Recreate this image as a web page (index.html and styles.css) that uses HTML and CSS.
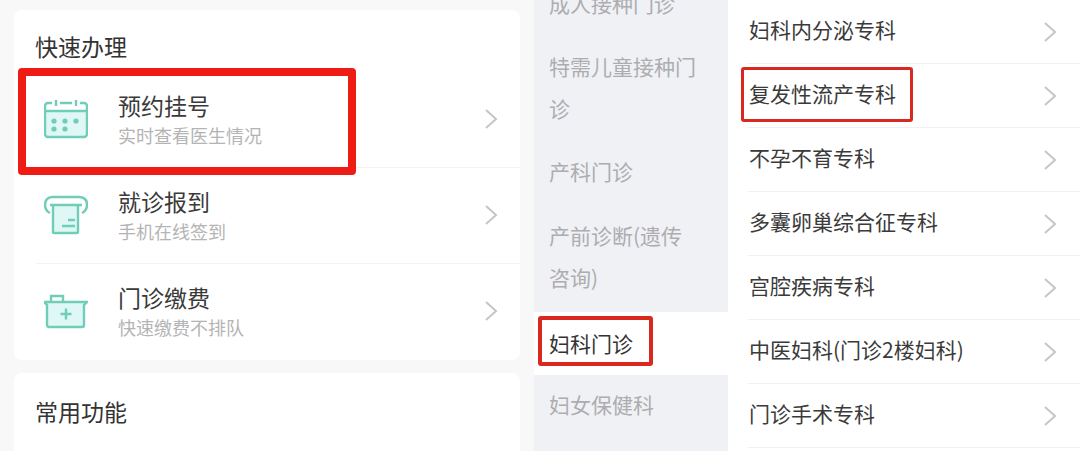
FILE: index.html
```html
<!DOCTYPE html>
<html lang="zh-CN">
<head>
    <meta charset="UTF-8">
    <meta name="viewport" content="width=device-width, initial-scale=1.0">
    <title>快速办理</title>
    <link rel="stylesheet" href="styles.css">
</head>
<body>
<div class="page">
    <div class="home">
        <section class="card">
            <h2 class="card-title">快速办理</h2>
            <div class="service">
                <svg class="service-icon" viewBox="0 0 44 40">
                    <path class="tint" d="M2 12h40v23a2 2 0 0 1-2 2H4a2 2 0 0 1-2-2z"/>
                    <path class="line" d="M8 4H4a3 3 0 0 0-3 3v28a3 3 0 0 0 3 3h36a3 3 0 0 0 3-3V7a3 3 0 0 0-3-3h-4M16 4h12M1 12h42M12 1v6M32 1v6"/>
                    <g class="dot">
                        <circle cx="10" cy="22" r="2.6"/><circle cx="21" cy="22" r="2.6"/><circle cx="32" cy="22" r="2.6"/>
                        <circle cx="10" cy="30" r="2.6"/><circle cx="21" cy="30" r="2.6"/>
                    </g>
                </svg>
                <div class="service-text">
                    <div class="service-name">预约挂号</div>
                    <div class="service-desc">实时查看医生情况</div>
                </div>
                <svg class="chevron" viewBox="0 0 12 20"><path d="M1 1l10 9-10 9"/></svg>
            </div>
            <div class="service">
                <svg class="service-icon" viewBox="0 0 44 40">
                    <path class="tint" d="M9 10h25v27a1 1 0 0 1-1 1H10a1 1 0 0 1-1-1z"/>
                    <path class="line" d="M6 18C2 16 1 13 1 10c0-5 3-8 7-8h27c5 0 8 3 8 8 0 3-1 6-5 8M6 10h32M9 10v27a1 1 0 0 0 1 1h23a1 1 0 0 0 1-1V10M24 25h7M18 31h13"/>
                </svg>
                <div class="service-text">
                    <div class="service-name">就诊报到</div>
                    <div class="service-desc">手机在线签到</div>
                </div>
                <svg class="chevron" viewBox="0 0 12 20"><path d="M1 1l10 9-10 9"/></svg>
            </div>
            <div class="service">
                <svg class="service-icon" viewBox="0 0 44 40">
                    <path class="tint" d="M3 11h37v23a2 2 0 0 1-2 2H5a2 2 0 0 1-2-2z"/>
                    <path class="line" d="M0 11h43l-3 3v20a2 2 0 0 1-2 2H5a2 2 0 0 1-2-2V14zM7 11V5h12v6M22 17.500v11M16.500 23h11"/>
                </svg>
                <div class="service-text">
                    <div class="service-name">门诊缴费</div>
                    <div class="service-desc">快速缴费不排队</div>
                </div>
                <svg class="chevron" viewBox="0 0 12 20"><path d="M1 1l10 9-10 9"/></svg>
            </div>
        </section>
        <section class="card card-second">
            <h2 class="card-title">常用功能</h2>
        </section>
    </div>

    <div class="depts">
        <div class="dept">成人接种门诊</div>
        <div class="dept">特需儿童接种门诊</div>
        <div class="dept">产科门诊</div>
        <div class="dept dept-long">产前诊断(遗传咨询)</div>
        <div class="dept dept-active">妇科门诊</div>
        <div class="dept">妇女保健科</div>
    </div>

    <div class="clinics">
        <div class="clinic"><span>妇科内分泌专科</span><svg class="chevron" viewBox="0 0 12 20"><path d="M1 1l10 9-10 9"/></svg></div>
        <div class="clinic"><span>复发性流产专科</span><svg class="chevron" viewBox="0 0 12 20"><path d="M1 1l10 9-10 9"/></svg></div>
        <div class="clinic"><span>不孕不育专科</span><svg class="chevron" viewBox="0 0 12 20"><path d="M1 1l10 9-10 9"/></svg></div>
        <div class="clinic"><span>多囊卵巢综合征专科</span><svg class="chevron" viewBox="0 0 12 20"><path d="M1 1l10 9-10 9"/></svg></div>
        <div class="clinic"><span>宫腔疾病专科</span><svg class="chevron" viewBox="0 0 12 20"><path d="M1 1l10 9-10 9"/></svg></div>
        <div class="clinic"><span>中医妇科(门诊2楼妇科)</span><svg class="chevron" viewBox="0 0 12 20"><path d="M1 1l10 9-10 9"/></svg></div>
        <div class="clinic"><span>门诊手术专科</span><svg class="chevron" viewBox="0 0 12 20"><path d="M1 1l10 9-10 9"/></svg></div>
    </div>

    <div class="mark mark-service"></div>
    <div class="mark mark-dept"></div>
    <div class="mark mark-clinic"></div>
</div>
</body>
</html>
```

FILE: styles.css
```css
body {
    margin: 0;
    font-family: "Noto Sans CJK SC", "Noto Sans", sans-serif;
    overflow: hidden;
}

.page {
    position: relative;
    display: flex;
    height: 451px;
    overflow: hidden;
    background-color: #f9f8f9;
}

.home {
    width: 506px;
    padding: 10px 14px 0;
    flex-shrink: 0;
}

.card {
    height: 350px;
    padding-left: 22px;
    background-color: #fff;
    border-radius: 8px;
}

.card-second {
    margin-top: 13px;
}

.card-second .card-title {
    padding-top: 23px;
    height: 39px;
}

.card-title {
    margin: 0 0 0 -1px;
    padding-top: 21px;
    height: 41px;
    font-size: 23px;
    line-height: 30px;
    font-weight: 400;
    color: #333;
}

.service {
    display: flex;
    align-items: center;
    height: 93px;
    padding: 0 23px 2px 8px;
    border-bottom: 1px solid #f3f3f3;
}

.service:last-child {
    border-bottom: none;
}

.service-icon {
    width: 44px;
    height: 40px;
    flex-shrink: 0;
    margin-right: 30px;
}

.tint {
    fill: #dff8f5;
}

.line {
    fill: none;
    stroke: #6fcdb8;
    stroke-width: 2.4;
}

.dot {
    fill: #6fcdb8;
}

.service-text {
    flex: 1;
}

.service-name {
    font-size: 23px;
    line-height: 30px;
    color: #3a3a3a;
}

.service-desc {
    margin-top: 2px;
    font-size: 18px;
    line-height: 26px;
    color: #b4b4b4;
}

.chevron {
    width: 12px;
    height: 20px;
    flex-shrink: 0;
    fill: none;
    stroke: #c6c6c6;
    stroke-width: 2;
}

.depts {
    width: 194px;
    margin-top: -26px;
    flex-shrink: 0;
    background-color: #f0f1f5;
}

.dept {
    padding: 7.5px 29px 13.5px 15px;
    font-size: 21px;
    line-height: 42px;
    color: #adadb0;
}

.dept-long {
    padding-top: 9px;
    padding-bottom: 12px;
}

.dept-active {
    margin-top: 2px;
    padding-top: 9.5px;
    padding-bottom: 11.5px;
    background-color: #fff;
    color: #333;
}

.clinics {
    flex: 1;
    padding-left: 20px;
    background-color: #fff;
}

.clinic {
    display: flex;
    align-items: center;
    justify-content: space-between;
    height: 63px;
    padding-right: 24px;
    font-size: 21px;
    color: #3a3a3a;
    border-bottom: 1px solid #f0f0f0;
}

.clinic span {
    margin: 0 0 6px 1px;
}

/* red annotation boxes on top of the screenshot */
.mark {
    position: absolute;
    box-sizing: border-box;
    border: 3px solid #d8281f;
    border-radius: 3px;
}

.mark-service {
    left: 18px;
    top: 68px;
    width: 338px;
    height: 107px;
    border: 8px solid #ee1c14;
    border-radius: 4px;
}

.mark-dept {
    left: 538px;
    top: 316px;
    width: 115px;
    height: 50px;
    border-width: 4px;
}

.mark-clinic {
    left: 741px;
    top: 67px;
    width: 172px;
    height: 55px;
}
```
